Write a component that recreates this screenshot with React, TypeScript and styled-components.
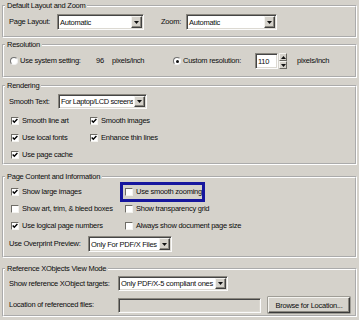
import styled, { createGlobalStyle } from 'styled-components';

const GlobalStyle = createGlobalStyle`
  html, body {
    margin: 0;
    padding: 0;
    background: #d5d2cb;
  }
  body {
    font-family: 'Liberation Sans', Arial, sans-serif;
    font-size: 7.5px;
    letter-spacing: -0.25px;
    color: #0c0c0c;
  }
`;

const Page = styled.div`
  width: 359px;
  height: 320px;
  overflow: hidden;
  box-sizing: border-box;
  padding: 1px 2px 0 2px;
  background: #d5d2cb;
  display: flex;
  flex-direction: column;
`;

const Group = styled.fieldset<{ $top?: number }>`
  margin: ${(p) => p.$top ?? 0}px 0 0;
  padding: 0;
  border: 2px groove #fff;
  min-width: 0;
`;

const Legend = styled.legend`
  padding: 0 2px;
  margin-left: 1px;
  height: 10px;
  line-height: 10px;
`;

const Body = styled.div<{ $pt: number; $pb: number }>`
  padding: ${(p) => p.$pt}px 0 ${(p) => p.$pb}px 5px;
  display: flex;
  flex-direction: column;
`;

const Row = styled.div<{ $h: number; $mt?: number }>`
  display: flex;
  align-items: center;
  height: ${(p) => p.$h}px;
  margin-top: ${(p) => p.$mt ?? 0}px;
  white-space: nowrap;
`;

const Text = styled.span<{ $w?: number; $ml?: number }>`
  flex: none;
  width: ${(p) => (p.$w ? `${p.$w}px` : 'auto')};
  margin-left: ${(p) => p.$ml ?? 0}px;
  line-height: 10px;
`;

const Combo = styled.div<{ $w: number; $h: number; $disabled?: boolean }>`
  flex: none;
  box-sizing: border-box;
  width: ${(p) => p.$w}px;
  height: ${(p) => p.$h}px;
  display: flex;
  align-items: stretch;
  background: ${(p) => (p.$disabled ? '#d5d2cb' : '#fff')};
  border: 1px solid;
  border-color: #8a877f #fbfbfb #fbfbfb #8a877f;
  box-shadow: inset 1px 1px 0 #454545, inset -1px -1px 0 #dcd9d2;
`;

const ComboValue = styled.span<{ $tight?: boolean }>`
  flex: 1;
  display: flex;
  align-items: center;
  padding-left: 2px;
  overflow: hidden;
  letter-spacing: ${(p) => (p.$tight ? '-0.4px' : 'inherit')};
`;

const DropButton = styled.span`
  flex: none;
  width: 11px;
  margin: 1px;
  box-sizing: border-box;
  display: flex;
  align-items: center;
  justify-content: center;
  background: #d5d2cb;
  border: 1px solid;
  border-color: #f4f3ef #404040 #404040 #f4f3ef;
  box-shadow: inset -1px -1px 0 #8a877f;
`;

const Spinner = styled.div`
  flex: none;
  width: 8px;
  height: 16px;
  margin-left: 1px;
  display: flex;
  flex-direction: column;
`;

const SpinButton = styled.span`
  flex: 1;
  box-sizing: border-box;
  display: flex;
  align-items: center;
  justify-content: center;
  background: #d5d2cb;
  border: 1px solid;
  border-color: #f4f3ef #6a6862 #6a6862 #f4f3ef;
`;

const Radio = styled.span<{ $ml?: number }>`
  flex: none;
  box-sizing: border-box;
  width: 8px;
  height: 8px;
  margin-left: ${(p) => p.$ml ?? 0}px;
  border-radius: 50%;
  background: #fff;
  border: 1px solid;
  border-color: #707070 #f0f0f0 #f0f0f0 #707070;
  display: flex;
  align-items: center;
  justify-content: center;
`;

const RadioDot = styled.span`
  width: 3px;
  height: 3px;
  border-radius: 50%;
  background: #111;
`;

const CheckGrid = styled.div<{ $col: number; $mt?: number }>`
  display: grid;
  grid-template-columns: ${(p) => p.$col}px 1fr;
  grid-auto-rows: 17px;
  margin: ${(p) => p.$mt ?? 0}px 0 0 2px;
`;

const CheckItem = styled.label<{ $highlight?: boolean }>`
  display: flex;
  align-items: center;
  align-self: center;
  gap: 3px;
  height: 10px;
  white-space: nowrap;
  ${(p) =>
    p.$highlight &&
    `
    width: 75px;
    outline: 3px solid #16169e;
    outline-offset: 2px;
  `}
`;

const Box = styled.span`
  flex: none;
  box-sizing: border-box;
  width: 8px;
  height: 8px;
  background: #fff;
  border: 1px solid;
  border-color: #6e6c66 #f4f3ef #f4f3ef #6e6c66;
  display: flex;
  align-items: center;
  justify-content: center;
`;

const Button = styled.div`
  flex: none;
  box-sizing: border-box;
  width: 82px;
  height: 16px;
  margin-left: 7px;
  display: flex;
  align-items: center;
  justify-content: center;
  background: #d5d2cb;
  border: 1px solid;
  border-color: #f4f3ef #3a3a3a #3a3a3a #f4f3ef;
  box-shadow: inset -1px -1px 0 #8a877f, 0 0 0 0.5px #6a6862;
`;

const Arrow = ({ up }: { up?: boolean }) => (
  <svg width="5" height="3" viewBox="0 0 5 3">
    <path d={up ? 'M2.5 0 L5 3 L0 3 Z' : 'M0 0 L5 0 L2.5 3 Z'} fill="#111" />
  </svg>
);

const ComboBox = ({ w, h, value, tight }: { w: number; h: number; value: string; tight?: boolean }) => (
  <Combo $w={w} $h={h}>
    <ComboValue $tight={tight}>{value}</ComboValue>
    <DropButton>
      <Arrow />
    </DropButton>
  </Combo>
);

const Check = ({ label, checked, highlight }: { label: string; checked?: boolean; highlight?: boolean }) => (
  <CheckItem $highlight={highlight}>
    <Box>
      {checked && (
        <svg width="6" height="6" viewBox="0 0 6 6">
          <path d="M0.7 2.6 L2.3 4.3 L5.4 1" stroke="#000" strokeWidth="1.4" fill="none" />
        </svg>
      )}
    </Box>
    {label}
  </CheckItem>
);

const App = () => {
  return (
    <Page>
      <GlobalStyle />

      <Group>
        <Legend>Default Layout and Zoom</Legend>
        <Body $pt={3} $pb={6}>
          <Row $h={16}>
            <Text $w={48}>Page Layout:</Text>
            <ComboBox w={87} h={16} value="Automatic" />
            <Text $w={25} $ml={17}>Zoom:</Text>
            <ComboBox w={91} h={16} value="Automatic" />
          </Row>
        </Body>
      </Group>

      <Group $top={2}>
        <Legend>Resolution</Legend>
        <Body $pt={3} $pb={7}>
          <Row $h={16}>
            <Radio $ml={1} />
            <Text $w={76} $ml={2}>Use system setting:</Text>
            <Text $w={16}>96</Text>
            <Text $w={61}>pixels/inch</Text>
            <Radio>
              <RadioDot />
            </Radio>
            <Text $w={72} $ml={2}>Custom resolution:</Text>
            <Combo $w={23} $h={16}>
              <ComboValue>110</ComboValue>
            </Combo>
            <Spinner>
              <SpinButton>
                <Arrow up />
              </SpinButton>
              <SpinButton>
                <Arrow />
              </SpinButton>
            </Spinner>
            <Text $ml={10}>pixels/inch</Text>
          </Row>
        </Body>
      </Group>

      <Group $top={3}>
        <Legend>Rendering</Legend>
        <Body $pt={3} $pb={0}>
          <Row $h={15}>
            <Text $w={49}>Smooth Text:</Text>
            <ComboBox w={89} h={15} value="For Laptop/LCD screens" tight />
          </Row>
          <CheckGrid $col={79} $mt={3}>
            <Check label="Smooth line art" checked />
            <Check label="Smooth images" checked />
            <Check label="Use local fonts" checked />
            <Check label="Enhance thin lines" checked />
            <Check label="Use page cache" checked />
          </CheckGrid>
        </Body>
      </Group>

      <Group $top={7}>
        <Legend>Page Content and Information</Legend>
        <Body $pt={1} $pb={4}>
          <CheckGrid $col={114}>
            <Check label="Show large images" checked />
            <Check label="Use smooth zooming" highlight />
            <Check label="Show art, trim, & bleed boxes" />
            <Check label="Show transparency grid" />
            <Check label="Use logical page numbers" checked />
            <Check label="Always show document page size" />
          </CheckGrid>
          <Row $h={16} $mt={2}>
            <Text $w={79}>Use Overprint Preview:</Text>
            <ComboBox w={84} h={16} value="Only For PDF/X Files" />
          </Row>
        </Body>
      </Group>

      <Group $top={6}>
        <Legend>Reference XObjects View Mode</Legend>
        <Body $pt={2} $pb={2}>
          <Row $h={15}>
            <Text $w={109}>Show reference XObject targets:</Text>
            <ComboBox w={110} h={15} value="Only PDF/X-5 compliant ones" />
          </Row>
          <Row $h={16} $mt={6}>
            <Text $w={109}>Location of referenced files:</Text>
            <Combo $w={143} $h={15} $disabled />
            <Button>Browse for Location...</Button>
          </Row>
        </Body>
      </Group>
    </Page>
  );
};

export default App;
